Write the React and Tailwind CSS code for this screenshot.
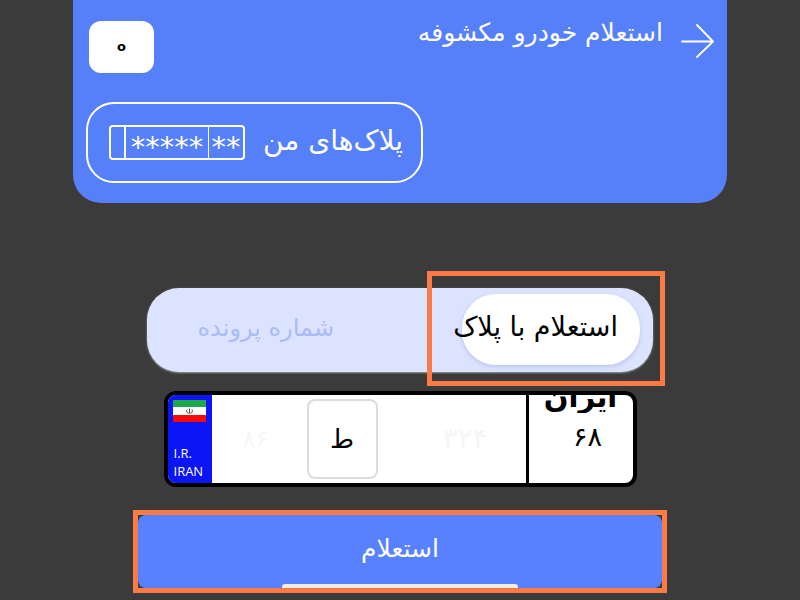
function Arrow() {
  return (
    <svg width="36" height="36" viewBox="0 0 36 36" fill="none" stroke="white" strokeWidth="1.8" strokeLinecap="round" strokeLinejoin="round">
      <path d="M4 18.5h31M19 2l16 16.5L19 34" />
    </svg>
  );
}

function Flag() {
  return (
    <svg width="33" height="22" viewBox="0 0 33 22">
      <rect width="33" height="7" fill="#1fa84a" />
      <rect y="7" width="33" height="8" fill="#ffffff" />
      <rect y="15" width="33" height="7" fill="#f70a0a" />
      <path d="M16.5 8.5v5M14 9.5c-1 2 0 3.5 2 3.8M19 9.5c1 2 0 3.5-2 3.8" stroke="#555" strokeWidth="1" fill="none" />
    </svg>
  );
}

function MyPlates() {
  return (
    <div className="flex items-center h-[81px] w-[337px] border-2 border-white rounded-[28px] pr-[18px] pl-[21px] justify-between">
      <span className="pb-[4px] text-[28px] text-white leading-none whitespace-nowrap">پلاک‌های من</span>
      <div dir="ltr" className="flex items-center h-[35px] w-[136px] border-2 border-white rounded-[4px] text-white text-[29px] leading-[31px]">
        <div className="w-[15px] h-[31px] border-r-2 border-white shrink-0" />
        <div className="w-[83px] h-[31px] pt-[5px] border-r border-white text-center shrink-0">*****</div>
        <div className="flex-1 h-[31px] pt-[5px] text-center">**</div>
      </div>
    </div>
  );
}

function Plate() {
  return (
    <div dir="ltr" className="flex w-[473px] h-[96px] border-[4px] border-black rounded-[12px] overflow-hidden bg-white">
      <div className="w-[44px] bg-[#0a14f5] shrink-0 flex flex-col pl-[5px] pt-[5px] text-white text-[13px] leading-[18px] font-['Open_Sans',sans-serif]">
        <Flag />
        <div className="mt-auto mb-[3px] pl-[1px]">
          <div>I.R.</div>
          <div>IRAN</div>
        </div>
      </div>
      <div className="w-[317px] shrink-0 flex items-center border-r-[3px] border-black">
        <span className="ml-[31px] w-[34px] text-[24px] text-[#f6f6f6]">۸۶</span>
        <div className="ml-[30px] w-[71px] h-[80px] border-2 border-[#dcdcdc] rounded-[8px] flex items-center justify-center text-[26px] text-black">ط</div>
        <span className="ml-[65px] text-[28px] text-[#f6f6f6]">۳۲۴</span>
      </div>
      <div className="flex-1 flex flex-col items-center overflow-hidden">
        <div className="h-[18px] overflow-hidden">
          <div className="-mt-[14px] text-[29px] font-bold leading-[32px] text-black">ایران</div>
        </div>
        <div className="mt-[6px] ml-[14px] text-[27px] leading-[36px] text-black">۶۸</div>
      </div>
    </div>
  );
}

export default function App() {
  return (
    <div dir="rtl" className="w-[800px] h-[600px] overflow-hidden bg-[#3b3b3b] flex flex-col items-center font-['DejaVu_Sans',sans-serif]">
      {/* Header card */}
      <div className="w-[654px] h-[203px] bg-[#567ffa] rounded-b-[28px] shrink-0 px-[13px] flex flex-col">
        <div className="flex items-start h-[102px]">
          <div className="pt-[23px]"><Arrow /></div>
          <div className="mr-[15px] pt-[17px] text-[25px] leading-[32px] text-white whitespace-nowrap">استعلام خودرو مکشوفه</div>
          <div dir="ltr" className="mr-auto ml-[3px] mt-[21px] w-[65px] h-[52px] bg-white rounded-[12px] flex items-center justify-center text-[13px] font-bold text-black">o</div>
        </div>
        <div className="pr-[291px]">
          <MyPlates />
        </div>
      </div>

      {/* Tabs */}
      <div className="relative mt-[85px] w-[506px] h-[84px] shrink-0 bg-[#dbe3ff] rounded-[32px] shadow-[0_1px_2px_rgba(255,255,255,0.5)] flex items-start pt-[6px] pr-[13px]">
        <div className="w-[178px] h-[71px] pb-[4px] bg-white rounded-[34px] shadow-[0_2px_4px_rgba(120,130,190,0.3)] flex items-center whitespace-nowrap pr-[22px] text-[27px] text-black">استعلام با پلاک</div>
        <div className="mr-[128px] h-[71px] pb-[4px] flex items-center text-[24px] text-[#a9bcf7] whitespace-nowrap">شماره پرونده</div>
        <div className="absolute -top-[17px] -right-[12px] w-[238px] h-[115px] border-[5px] border-[#fb7a46] pointer-events-none" />
      </div>

      <div className="mt-[19px] shrink-0">
        <Plate />
      </div>

      {/* Submit */}
      <div className="mt-[23px] w-[534px] h-[83px] shrink-0 border-[5px] border-[#fb7a46]">
        <div className="relative w-full h-full pb-[6px] bg-[#5881ff] rounded-[8px] flex items-center justify-center text-[25px] text-white">
          استعلام
          <div className="absolute bottom-0 left-[144px] w-[236px] h-[4px] bg-[#f4ece6] rounded-t-[3px]" />
        </div>
      </div>
    </div>
  );
}
